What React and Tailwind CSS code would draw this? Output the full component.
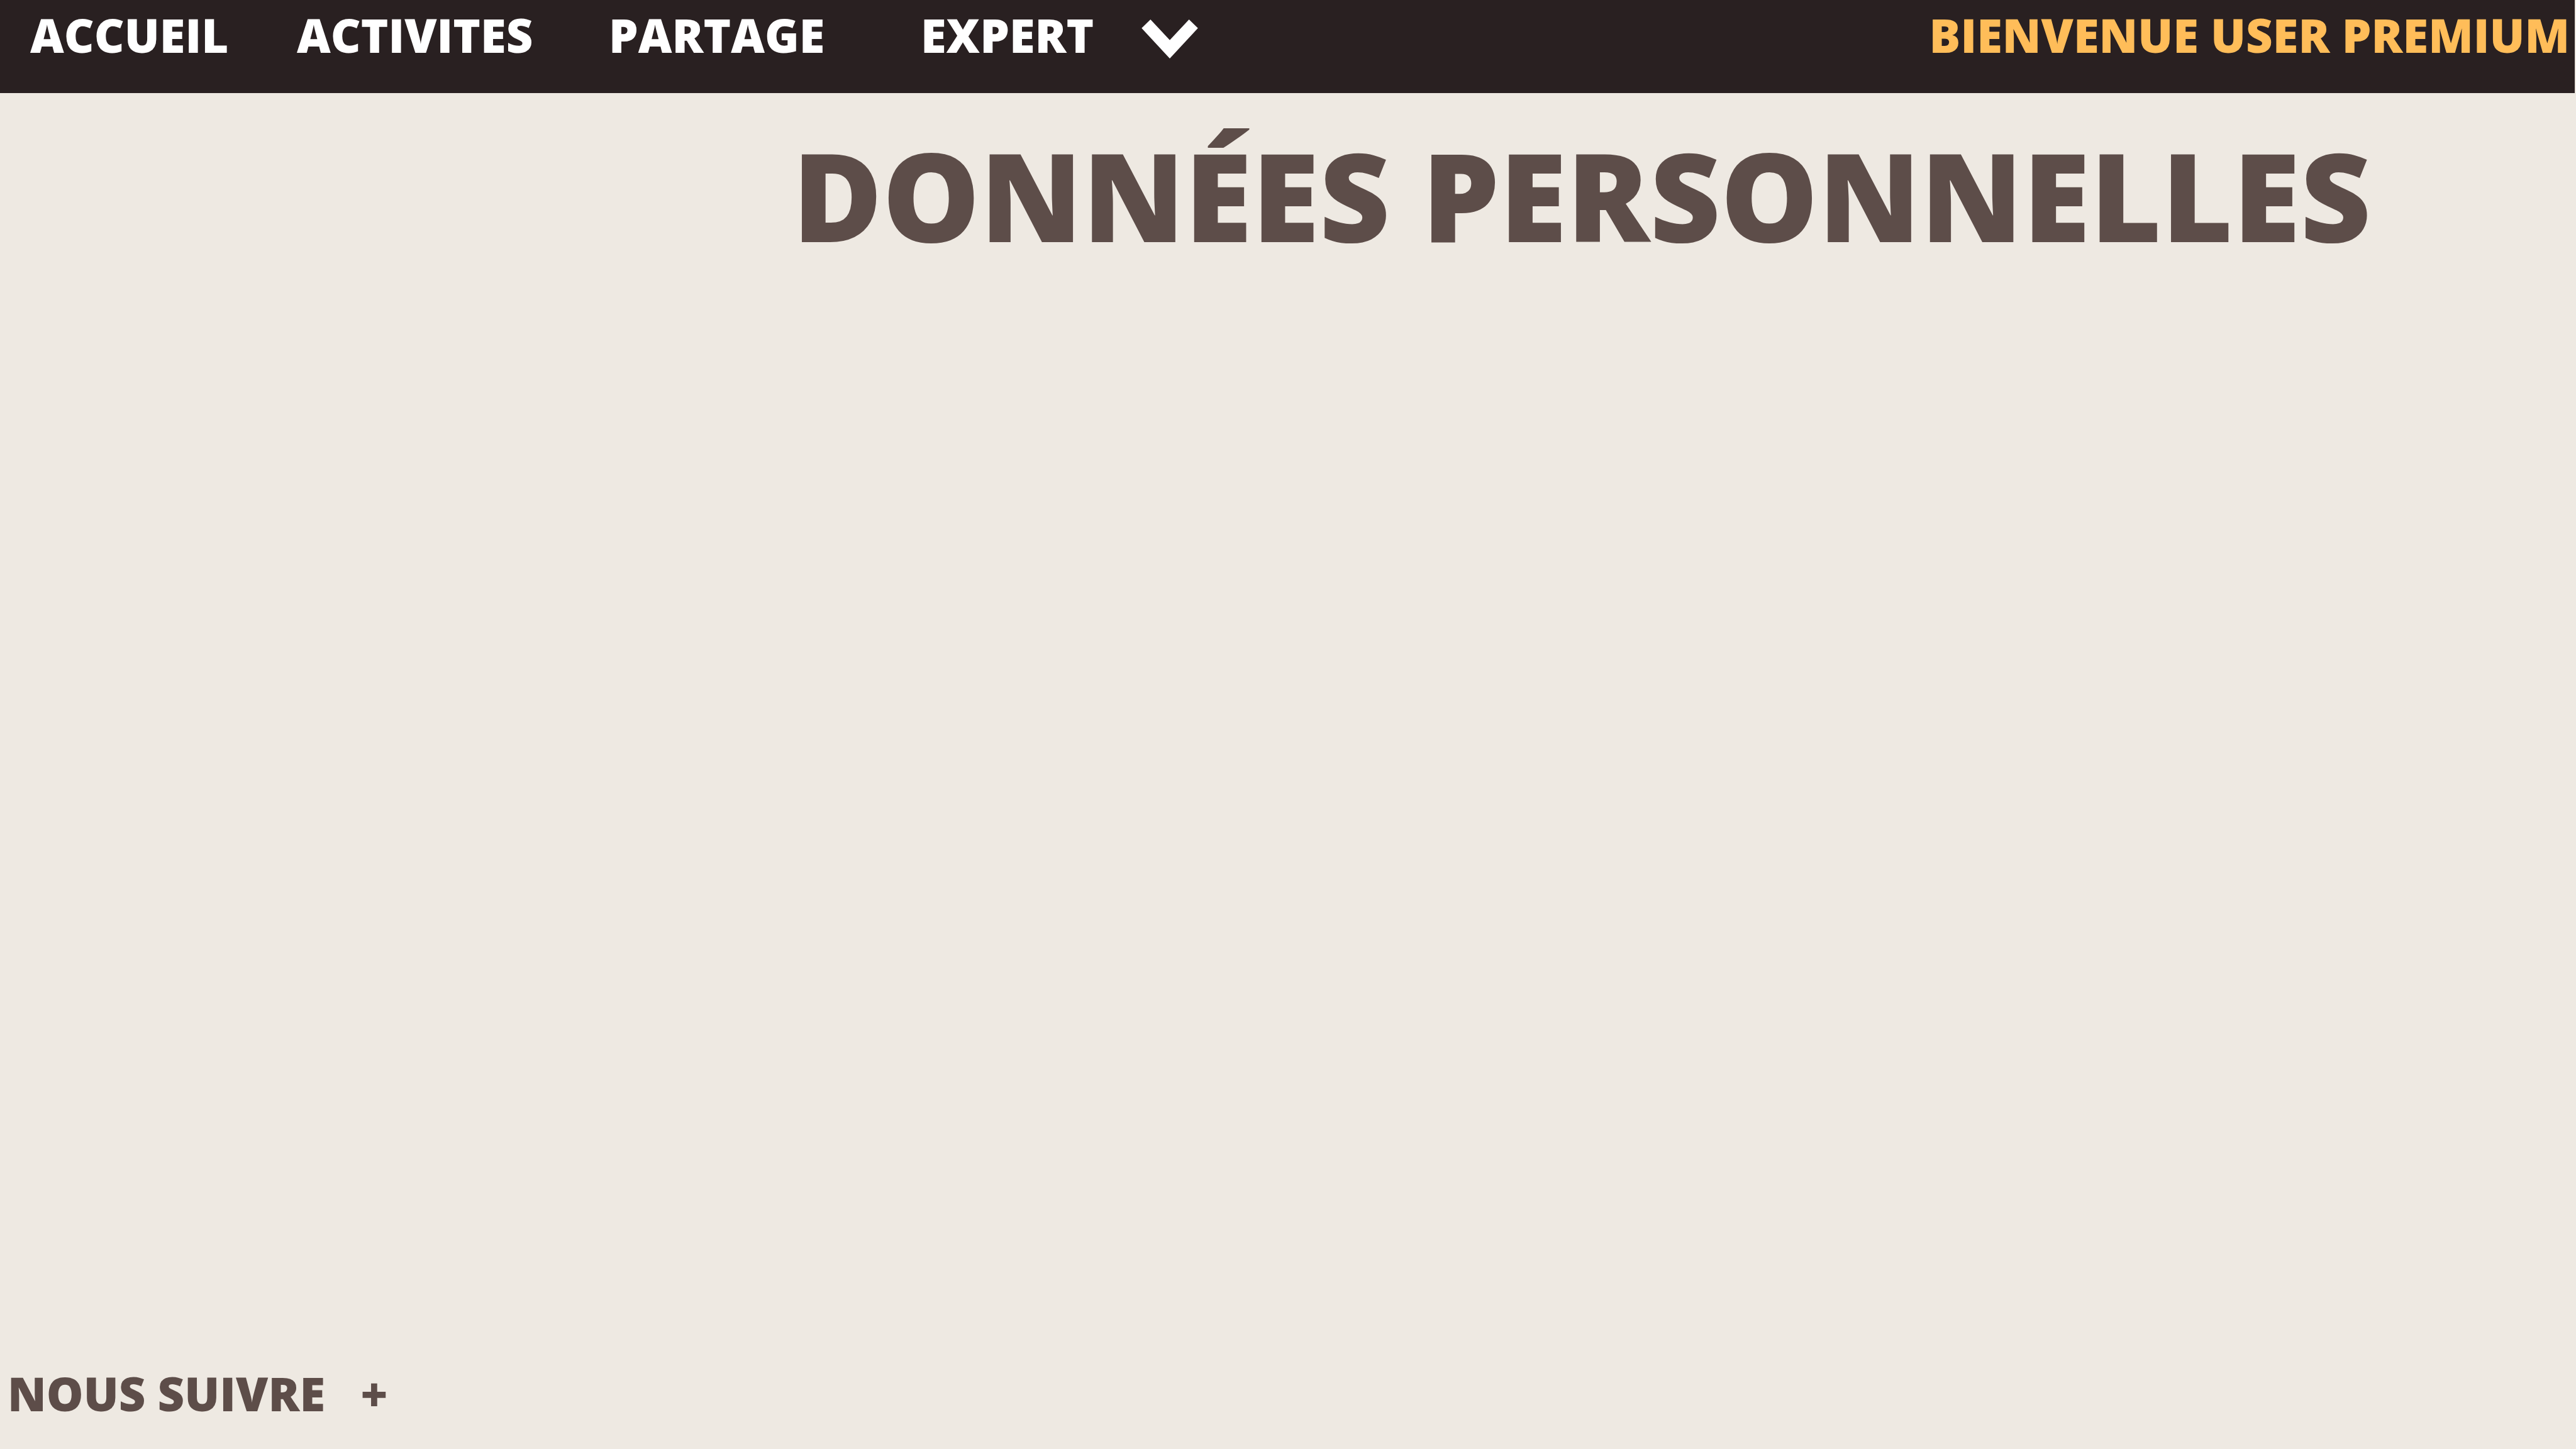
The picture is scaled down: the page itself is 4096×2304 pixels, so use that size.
import React from "react";

const links = [
  { label: "ACCUEIL", width: "w-[424px]" },
  { label: "ACTIVITES", width: "w-[496px]" },
  { label: "PARTAGE", width: "w-[496px]" },
];

function Chevron() {
  return (
    <svg className="mt-3 h-[62px] w-[90px]" viewBox="0 0 130 90" aria-hidden="true">
      <path d="M0 20 20.500 0 65 47.500 109.500 0 130 20 65 90Z" fill="currentColor" />
    </svg>
  );
}

export default function App() {
  return (
    <div className="flex min-h-screen flex-col bg-[#eee9e2] font-['Open_Sans',sans-serif] text-[74px] leading-[112px] font-extrabold text-[#5d4d49]">
      <header className="mr-[2px] flex h-[148px] items-start justify-between bg-[#292021] whitespace-nowrap">
        <nav className="flex pl-12 text-white" aria-label="Navigation principale">
          {links.map(({ label, width }) => (
            <div key={label} className={width}>
              <a href="#">{label}</a>
            </div>
          ))}
          <button type="button" className="flex items-center gap-[76px]">
            EXPERT
            <Chevron />
          </button>
        </nav>
        <p className="pr-2 text-[#ffbd59]">BIENVENUE USER PREMIUM</p>
      </header>
      <main className="grow pt-14 pl-[1260px]">
        <h1 className="text-[195px] leading-[212px] whitespace-nowrap">DONNÉES PERSONNELLES</h1>
      </main>
      <footer className="pb-8 pl-3">
        <button type="button" className="flex gap-[56px]">
          <span>NOUS SUIVRE</span>
          <span>+</span>
        </button>
      </footer>
    </div>
  );
}
